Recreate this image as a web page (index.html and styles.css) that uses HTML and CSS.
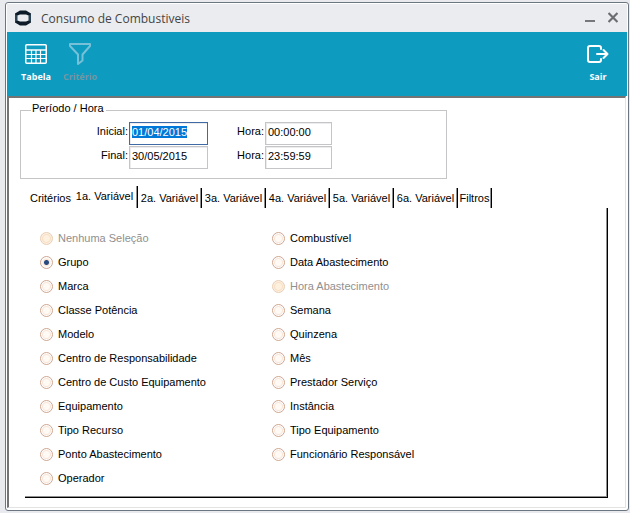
FILE: index.html
```html
<!DOCTYPE html>
<html lang="pt-BR">
<head>
    <meta charset="UTF-8">
    <meta name="viewport" content="width=device-width, initial-scale=1.0">
    <title>Consumo de Combustiveis</title>
    <link rel="stylesheet" href="styles.css">
</head>
<body>
    <div class="window">
        <!-- Title bar -->
        <header class="titlebar">
            <svg class="logo" width="16" height="16" viewBox="0 0 16 16">
                <path d="M5 0.500 H11 L16 3.500 V6.500 L11 4.500 H5 L0 6.500 V3.500 Z" fill="#0d1b29"/>
                <path d="M5 15.500 H11 L16 12.500 V9.500 L11 11.500 H5 L0 9.500 V12.500 Z" fill="#0d1b29"/>
                <path d="M0 4 L2.500 5.500 V10.500 L0 12 Z M16 4 L13.500 5.500 V10.500 L16 12 Z" fill="#2b4252"/>
            </svg>
            <h1>Consumo de Combustiveis</h1>
            <button type="button" class="window-button" aria-label="Minimizar">
                <svg width="10" height="12" viewBox="0 0 10 12"><path d="M0 9h10" stroke="#77787b" stroke-width="2"/></svg>
            </button>
            <button type="button" class="window-button" aria-label="Fechar">
                <svg width="10" height="12" viewBox="0 0 10 12"><path d="M0.500 1l9 9M9.500 1l-9 9" stroke="#6c6d70" stroke-width="2.200"/></svg>
            </button>
        </header>

        <!-- Toolbar -->
        <nav class="toolbar">
            <button type="button" class="tool">
                <svg width="22" height="22" viewBox="0 0 22 22" fill="none" stroke="#fff">
                    <rect x="0.750" y="1.750" width="20.500" height="18.500" rx="1" stroke-width="1.500"/>
                    <path d="M1 7h20" stroke-width="1.500"/>
                    <path d="M1 11.500h20M1 15.500h20M6.500 7v13M11 7v13M15.500 7v13" stroke-width="1.200"/>
                </svg>
                Tabela
            </button>
            <button type="button" class="tool" disabled>
                <svg width="22" height="22" viewBox="0 0 22 22" fill="none" stroke="#76c0d8" stroke-width="2" stroke-linejoin="round">
                    <path d="M1 1h20v2L13.500 11.500v6L9 21V11.500L1 3Z"/>
                </svg>
                Critério
            </button>
            <button type="button" class="tool tool-exit">
                <svg width="22" height="22" viewBox="0 0 22 22" fill="none" stroke="#fff" stroke-width="2" stroke-linecap="round" stroke-linejoin="round">
                    <path d="M14 6V5Q14 3 12 3H3Q1 3 1 5V17Q1 19 3 19H12Q14 19 14 17V16"/>
                    <path d="M10 11H20M16.500 7l4 4L16.500 15"/>
                </svg>
                Sair
            </button>
        </nav>

        <main class="content">
            <!-- Period -->
            <fieldset class="period">
                <legend>Período / Hora</legend>
                <label for="start-date">Inicial:</label>
                <input type="text" id="start-date" value="01/04/2015">
                <label for="start-time">Hora:</label>
                <input type="text" id="start-time" value="00:00:00">
                <label for="end-date">Final:</label>
                <input type="text" id="end-date" value="30/05/2015">
                <label for="end-time">Hora:</label>
                <input type="text" id="end-time" value="23:59:59">
            </fieldset>

            <!-- Tabs -->
            <div class="tabs" role="tablist">
                <button type="button" class="tab tab-first" role="tab">Critérios</button>
                <button type="button" class="tab active" role="tab" aria-selected="true">1a. Variável</button>
                <button type="button" class="tab" role="tab">2a. Variável</button>
                <button type="button" class="tab" role="tab">3a. Variável</button>
                <button type="button" class="tab" role="tab">4a. Variável</button>
                <button type="button" class="tab" role="tab">5a. Variável</button>
                <button type="button" class="tab" role="tab">6a. Variável</button>
                <button type="button" class="tab tab-last" role="tab">Filtros</button>
            </div>

            <div class="panel" role="tabpanel">
                <div class="options">
                    <label class="disabled"><input type="radio" name="variable" disabled>Nenhuma Seleção</label>
                    <label><input type="radio" name="variable" checked>Grupo</label>
                    <label><input type="radio" name="variable">Marca</label>
                    <label><input type="radio" name="variable">Classe Potência</label>
                    <label><input type="radio" name="variable">Modelo</label>
                    <label><input type="radio" name="variable">Centro de Responsabilidade</label>
                    <label><input type="radio" name="variable">Centro de Custo Equipamento</label>
                    <label><input type="radio" name="variable">Equipamento</label>
                    <label><input type="radio" name="variable">Tipo Recurso</label>
                    <label><input type="radio" name="variable">Ponto Abastecimento</label>
                    <label><input type="radio" name="variable">Operador</label>
                    <label><input type="radio" name="variable">Combustível</label>
                    <label><input type="radio" name="variable">Data Abastecimento</label>
                    <label class="disabled"><input type="radio" name="variable" disabled>Hora Abastecimento</label>
                    <label><input type="radio" name="variable">Semana</label>
                    <label><input type="radio" name="variable">Quinzena</label>
                    <label><input type="radio" name="variable">Mês</label>
                    <label><input type="radio" name="variable">Prestador Serviço</label>
                    <label><input type="radio" name="variable">Instância</label>
                    <label><input type="radio" name="variable">Tipo Equipamento</label>
                    <label><input type="radio" name="variable">Funcionário Responsável</label>
                </div>
            </div>
        </main>
    </div>

    <script>
        const startDate = document.getElementById('start-date');
        startDate.focus();
        startDate.select();
    </script>
</body>
</html>
```
FILE: styles.css
```css
* {
    box-sizing: border-box;
}
body {
    display: flex;
    min-height: 100vh;
    margin: 0;
    padding: 2px 1px 2px 5px;
    background-color: #e9eaee;
    font-family: "Liberation Sans", Arial, sans-serif;
    font-size: 11px;
    color: #000;
}
button, input {
    font: inherit;
    color: inherit;
}
button {
    padding: 0;
    border: none;
    background: none;
}
.window {
    flex: 1;
    display: flex;
    flex-direction: column;
    padding: 1px;
    border: 1px solid #6b7680;
    border-radius: 3px;
    background-color: #fff;
}
.titlebar {
    display: flex;
    align-items: center;
    gap: 10px;
    height: 28px;
    padding: 0 9px 0 8px;
    background-color: #ebecef;
}
.titlebar h1 {
    flex: 1;
    margin: 0;
    font-family: "Open Sans", "Noto Sans", sans-serif;
    font-size: 12px;
    font-weight: normal;
    color: #444;
}
.window-button {
    display: flex;
    margin-left: 3px;
}
.toolbar {
    display: flex;
    height: 64px;
    padding: 11px 7px 0;
    background-color: #0d9bc0;
}
.tool {
    display: flex;
    flex-direction: column;
    align-items: center;
    gap: 5px;
    width: 44px;
    height: 42px;
    font-family: "Open Sans", "Noto Sans", sans-serif;
    font-size: 9px;
    line-height: 14px;
    font-weight: bold;
    color: #fff;
}
.tool:disabled {
    color: #7397a2;
}
.tool svg {
    flex-shrink: 0;
}
.tool-exit {
    margin-left: auto;
}
.content {
    flex: 1;
    display: flex;
    flex-direction: column;
    margin: 0 1px 1px 0;
    padding: 3px 17px 9px 11px;
    border: 2px solid #747474;
    border-right: 1px solid #e3e3e3;
    border-bottom: 1px solid #e3e3e3;
}

/* Period */
.period {
    display: grid;
    grid-template-columns: 108px 79px 57px 67px;
    row-gap: 1px;
    max-width: 427px;
    margin: 0;
    padding: 3px 0 9px;
    border: 1px solid #c5c5c8;
}
.period legend {
    margin-left: 10px;
    padding: 0 2px 4px 1px;
    line-height: 14px;
}
.period label {
    padding: 2px 1px 0 0;
    line-height: 14px;
    text-align: right;
}
.period input {
    width: 100%;
    height: 23px;
    padding: 0 2px 4px;
    border: 1px solid #c5c5c8;
    box-shadow: inset 1px 1px #ececef;
    background-color: #fff;
    outline: none;
}
.period input:focus {
    border-color: #3f6aa5;
}
.period input::selection {
    background-color: #0078d7;
    color: #fff;
}

/* Tabs */
.tabs {
    display: flex;
    align-items: flex-end;
    height: 29px;
}
.tab {
    width: 64px;
    height: 20px;
    border-right: 1px solid #000;
    box-shadow: inset -1px 0 #909090;
    white-space: nowrap;
}
.tab.active {
    width: 66px;
    height: 22px;
    padding-bottom: 3px;
}
.tab-first {
    width: 51px;
    margin-left: 1px;
    padding-left: 8px;
    border-right: none;
    box-shadow: none;
}
.tab-last {
    width: 34px;
}

/* Options */
.panel {
    flex: 1;
    margin-left: 5px;
    padding: 18px 13px 0 15px;
    border-right: 1px solid #000;
    border-bottom: 1px solid #000;
    box-shadow: inset -1px -1px #909090;
}
.options {
    display: grid;
    grid-template-rows: repeat(11, 24px);
    grid-auto-columns: 232px;
    grid-auto-flow: column;
}
.options label {
    display: flex;
    align-items: center;
    gap: 5px;
}
.options .disabled {
    color: #909090;
}
.options input {
    appearance: none;
    width: 13px;
    height: 13px;
    margin: 0;
    border: 1px solid #cfa690;
    border-radius: 50%;
    background: radial-gradient(circle, #fffaf4 0 3px, #f8e5d8 4px, #fff 5px);
}
.options input:checked {
    background: radial-gradient(circle, #284a80 0 2px, #f8e5d8 3px, #fff 5px);
}
.options input:disabled {
    border-color: #e8ceb4;
    background: radial-gradient(circle, #fdf0df 0 3px, #f8dfc5 4px, #fdf0e2 5px);
}
```
